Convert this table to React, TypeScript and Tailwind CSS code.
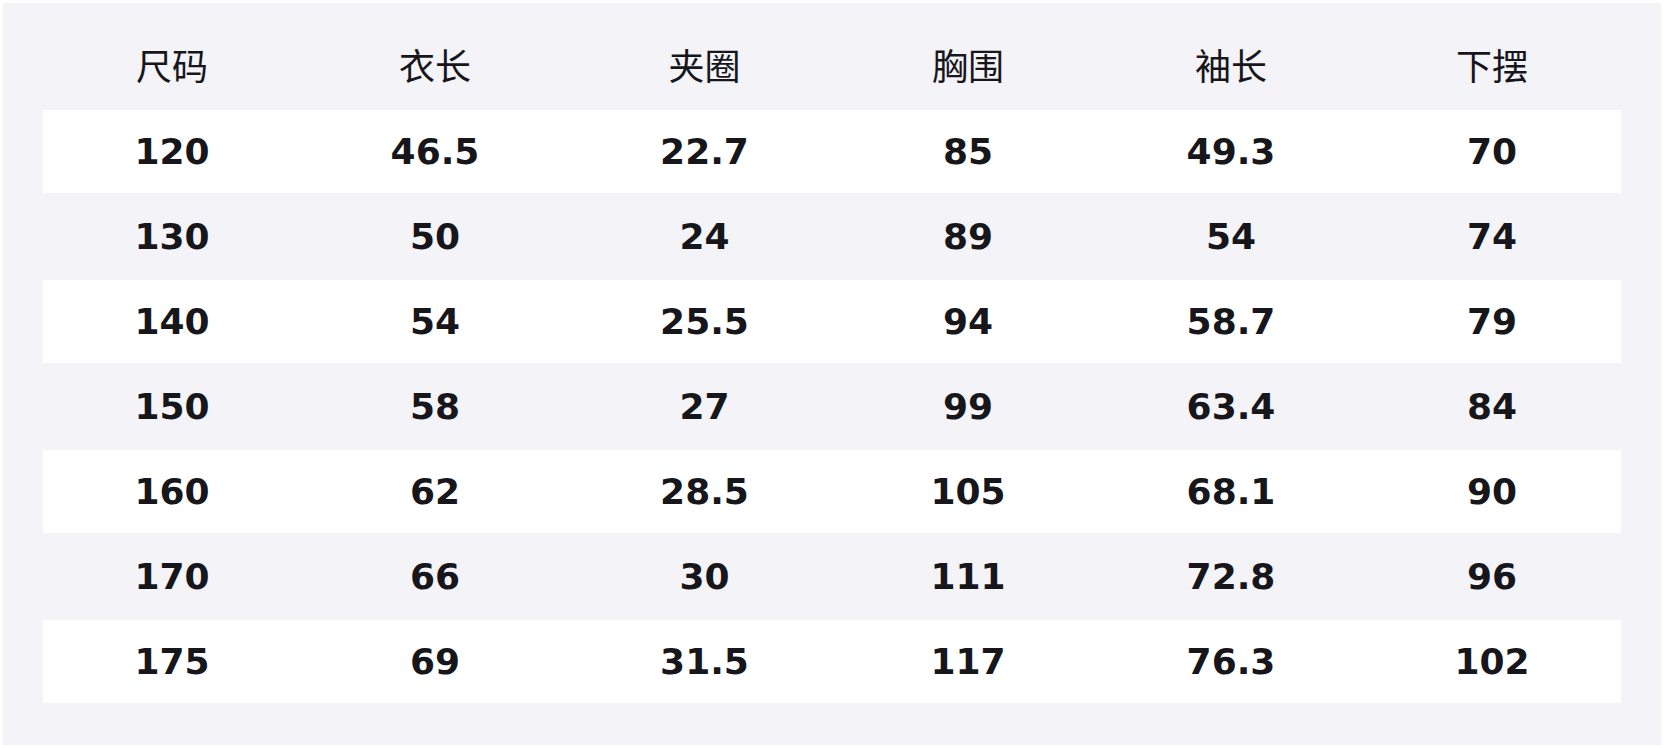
const headers = ["尺码", "衣长", "夹圈", "胸围", "袖长", "下摆"];

const rows = [
  ["120", "46.5", "22.7", "85", "49.3", "70"],
  ["130", "50", "24", "89", "54", "74"],
  ["140", "54", "25.5", "94", "58.7", "79"],
  ["150", "58", "27", "99", "63.4", "84"],
  ["160", "62", "28.5", "105", "68.1", "90"],
  ["170", "66", "30", "111", "72.8", "96"],
  ["175", "69", "31.5", "117", "76.3", "102"],
];

// columns are a little uneven in the original (auto table layout)
const cols = "grid grid-cols-[258px_268px_271px_256px_270px_252px]";

export default function App() {
  return (
    <div className="w-[1664px] h-[748px] bg-white p-[3px]">
      <div className="h-full bg-[#f3f3f8] px-[40px] pb-[41px] text-[#16161b]">
        <div className={cols + " h-[106px] pt-[16px] items-center"}>
          {headers.map((h) => (
            <div
              key={h}
              className="text-center text-[36px] leading-none"
              style={{ fontFamily: '"Noto Sans CJK SC", "Noto Sans", sans-serif' }}
            >
              {h}
            </div>
          ))}
        </div>
        {rows.map((r, i) => (
          <div
            key={r[0]}
            className={
              cols +
              " h-[85px] items-center border-y border-[#f3f3f8] " +
              (i % 2 === 0 ? "bg-white" : "bg-[#f3f3f8]")
            }
          >
            {r.map((v, j) => (
              <div
                key={j}
                className="text-center text-[36px] font-bold leading-none"
                style={{ fontFamily: '"DejaVu Sans", sans-serif' }}
              >
                {v}
              </div>
            ))}
          </div>
        ))}
      </div>
    </div>
  );
}
